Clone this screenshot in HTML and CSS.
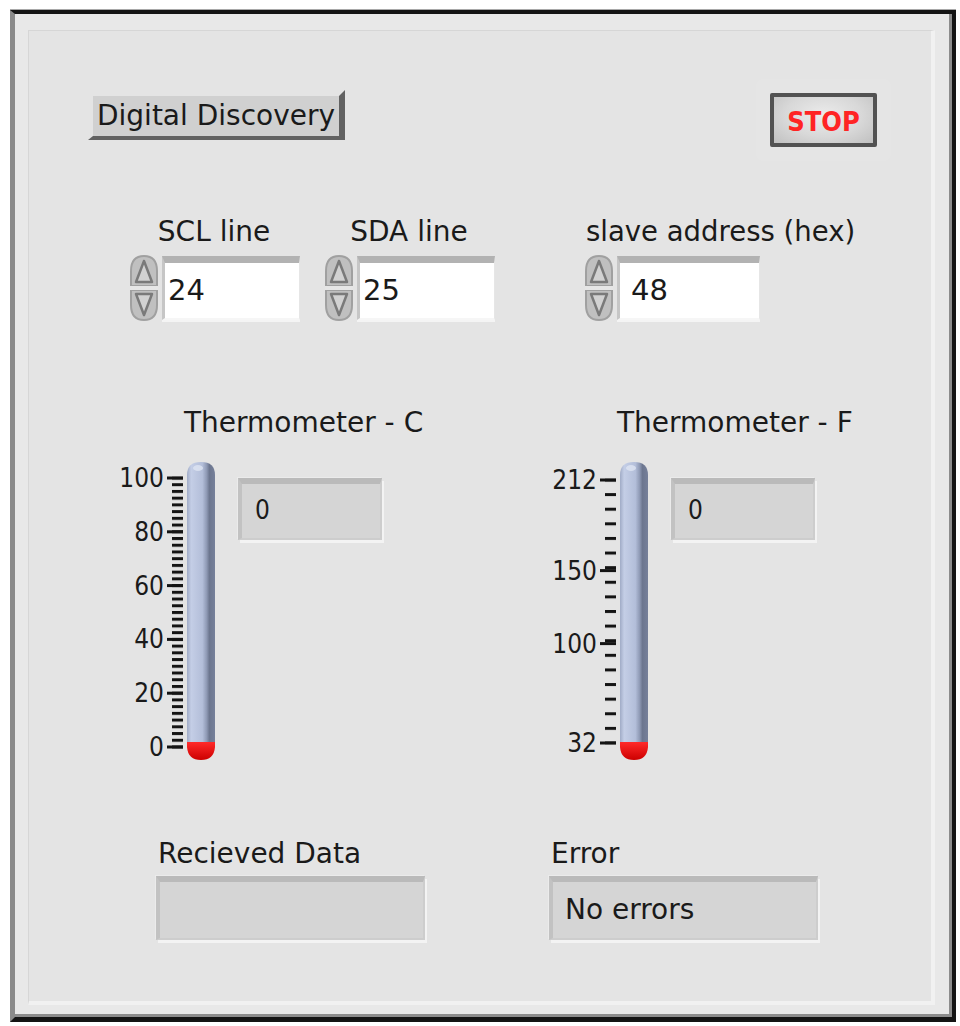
FILE: index.html
```html
<!DOCTYPE html>
<html>
<head>
<meta charset="utf-8">
<title>I2C Thermometer</title>
<link rel="stylesheet" href="styles.css">
</head>
<body>
<div class="window">
  <div class="panel">
    <div class="row-top">
      <div class="btn-dd">Digital Discovery</div>
      <div class="btn-stop">STOP</div>
    </div>

    <div class="row-controls">
      <div class="ctl">
        <div class="lbl">SCL line</div>
        <div class="numctl">
          <svg class="spin" viewBox="0 0 32 70" width="32" height="70">
            <path d="M3,33 L3,18 Q3,3 16,3 Q29,3 29,18 L29,33 Z" fill="#c0c0c0" stroke="#a0a0a0" stroke-width="2"/>
            <path d="M16,8 L8,29 L24,29 Z" fill="#d2d2d2" stroke="#7a7a7a" stroke-width="2.5" stroke-linejoin="round"/>
            <path d="M3,37 L3,52 Q3,67 16,67 Q29,67 29,52 L29,37 Z" fill="#c0c0c0" stroke="#a0a0a0" stroke-width="2"/>
            <path d="M16,62 L8,41 L24,41 Z" fill="#d2d2d2" stroke="#7a7a7a" stroke-width="2.5" stroke-linejoin="round"/>
            <rect x="2" y="33" width="28" height="4" fill="#e6e6e6"/>
          </svg>
          <div class="numbox">24</div>
        </div>
      </div>
      <div class="ctl ctl-sda">
        <div class="lbl">SDA line</div>
        <div class="numctl">
          <svg class="spin" viewBox="0 0 32 70" width="32" height="70">
            <path d="M3,33 L3,18 Q3,3 16,3 Q29,3 29,18 L29,33 Z" fill="#c0c0c0" stroke="#a0a0a0" stroke-width="2"/>
            <path d="M16,8 L8,29 L24,29 Z" fill="#d2d2d2" stroke="#7a7a7a" stroke-width="2.5" stroke-linejoin="round"/>
            <path d="M3,37 L3,52 Q3,67 16,67 Q29,67 29,52 L29,37 Z" fill="#c0c0c0" stroke="#a0a0a0" stroke-width="2"/>
            <path d="M16,62 L8,41 L24,41 Z" fill="#d2d2d2" stroke="#7a7a7a" stroke-width="2.5" stroke-linejoin="round"/>
            <rect x="2" y="33" width="28" height="4" fill="#e6e6e6"/>
          </svg>
          <div class="numbox">25</div>
        </div>
      </div>
      <div class="ctl ctl-slave">
        <div class="lbl">slave address (hex)</div>
        <div class="numctl">
          <svg class="spin" viewBox="0 0 32 70" width="32" height="70">
            <path d="M3,33 L3,18 Q3,3 16,3 Q29,3 29,18 L29,33 Z" fill="#c0c0c0" stroke="#a0a0a0" stroke-width="2"/>
            <path d="M16,8 L8,29 L24,29 Z" fill="#d2d2d2" stroke="#7a7a7a" stroke-width="2.5" stroke-linejoin="round"/>
            <path d="M3,37 L3,52 Q3,67 16,67 Q29,67 29,52 L29,37 Z" fill="#c0c0c0" stroke="#a0a0a0" stroke-width="2"/>
            <path d="M16,62 L8,41 L24,41 Z" fill="#d2d2d2" stroke="#7a7a7a" stroke-width="2.5" stroke-linejoin="round"/>
            <rect x="2" y="33" width="28" height="4" fill="#e6e6e6"/>
          </svg>
          <div class="numbox numbox-wide">48</div>
        </div>
      </div>
    </div>

    <div class="row-thermo">
      <div class="thermo">
        <div class="lbl thermo-lbl">Thermometer - C</div>
        <div class="thermo-body">
          <svg class="scale" viewBox="0 0 110 310" width="110" height="310">
            <defs>
              <linearGradient id="tubeC" x1="0" x2="1" y1="0" y2="0">
                <stop offset="0" stop-color="#a0abc6"/>
                <stop offset="0.15" stop-color="#c4cee6"/>
                <stop offset="0.55" stop-color="#b3bed9"/>
                <stop offset="0.7" stop-color="#8f9ab5"/>
                <stop offset="0.8" stop-color="#6c768f"/>
                <stop offset="1" stop-color="#76809a"/>
              </linearGradient>
              <linearGradient id="bulbC" x1="0" x2="0" y1="0" y2="1">
                <stop offset="0" stop-color="#ff2a2a"/>
                <stop offset="1" stop-color="#cc0000"/>
              </linearGradient>
              <pattern id="ticksC" x="0" y="21.5" width="110" height="6.725" patternUnits="userSpaceOnUse">
                <rect x="62" y="0" width="11" height="3" fill="#141414"/>
              </pattern>
            </defs>
            <rect x="60" y="21.5" width="15" height="273" fill="url(#ticksC)"/>
            <g fill="#141414">
              <rect x="57" y="21.5" width="16" height="3"/>
              <rect x="57" y="75.3" width="16" height="3"/>
              <rect x="57" y="129.1" width="16" height="3"/>
              <rect x="57" y="182.9" width="16" height="3"/>
              <rect x="57" y="236.7" width="16" height="3"/>
              <rect x="57" y="290.5" width="16" height="3"/>
            </g>
            <g class="scale-txt">
              <text x="54" y="23" text-anchor="end" dominant-baseline="central">100</text>
              <text x="54" y="76.8" text-anchor="end" dominant-baseline="central">80</text>
              <text x="54" y="130.6" text-anchor="end" dominant-baseline="central">60</text>
              <text x="54" y="184.4" text-anchor="end" dominant-baseline="central">40</text>
              <text x="54" y="238.2" text-anchor="end" dominant-baseline="central">20</text>
              <text x="54" y="292" text-anchor="end" dominant-baseline="central">0</text>
            </g>
            <path d="M77,292 L77,20 Q77,7 91,7 Q105,7 105,20 L105,292 Z" fill="url(#tubeC)"/>
            <ellipse cx="88" cy="13" rx="5" ry="3" fill="#dfe5f3" opacity="0.8"/>
            <path d="M77,287 L105,287 L105,292 Q104,305 91,305 Q78,305 77,292 Z" fill="url(#bulbC)"/>
          </svg>
          <div class="ind ind-small">0</div>
        </div>
      </div>
      <div class="thermo thermo-f">
        <div class="lbl thermo-lbl">Thermometer - F</div>
        <div class="thermo-body">
          <svg class="scale" viewBox="0 0 110 310" width="110" height="310">
            <defs>
              <linearGradient id="tubeF" x1="0" x2="1" y1="0" y2="0">
                <stop offset="0" stop-color="#a0abc6"/>
                <stop offset="0.15" stop-color="#c4cee6"/>
                <stop offset="0.55" stop-color="#b3bed9"/>
                <stop offset="0.7" stop-color="#8f9ab5"/>
                <stop offset="0.8" stop-color="#6c768f"/>
                <stop offset="1" stop-color="#76809a"/>
              </linearGradient>
              <linearGradient id="bulbF" x1="0" x2="0" y1="0" y2="1">
                <stop offset="0" stop-color="#ff2a2a"/>
                <stop offset="1" stop-color="#cc0000"/>
              </linearGradient>
              <pattern id="ticksF" x="0" y="23.5" width="110" height="14.611" patternUnits="userSpaceOnUse">
                <rect x="62" y="0" width="11" height="3" fill="#141414"/>
              </pattern>
            </defs>
            <rect x="60" y="23.5" width="15" height="266" fill="url(#ticksF)"/>
            <g fill="#141414">
              <rect x="57" y="23.5" width="16" height="3"/>
              <rect x="57" y="114.1" width="16" height="3"/>
              <rect x="57" y="187.1" width="16" height="3"/>
              <rect x="57" y="286.5" width="16" height="3"/>
            </g>
            <g class="scale-txt">
              <text x="54" y="25" text-anchor="end" dominant-baseline="central">212</text>
              <text x="54" y="115.6" text-anchor="end" dominant-baseline="central">150</text>
              <text x="54" y="188.6" text-anchor="end" dominant-baseline="central">100</text>
              <text x="54" y="288" text-anchor="end" dominant-baseline="central">32</text>
            </g>
            <path d="M77,292 L77,20 Q77,7 91,7 Q105,7 105,20 L105,292 Z" fill="url(#tubeF)"/>
            <ellipse cx="88" cy="13" rx="5" ry="3" fill="#dfe5f3" opacity="0.8"/>
            <path d="M77,287 L105,287 L105,292 Q104,305 91,305 Q78,305 77,292 Z" fill="url(#bulbF)"/>
          </svg>
          <div class="ind ind-small">0</div>
        </div>
      </div>
    </div>

    <div class="row-bottom">
      <div class="out">
        <div class="lbl">Recieved Data</div>
        <div class="ind ind-wide"></div>
      </div>
      <div class="out out-err">
        <div class="lbl">Error</div>
        <div class="ind ind-wide">No errors</div>
      </div>
    </div>
  </div>
</div>
</body>
</html>
```

FILE: styles.css
```css
html, body {
  margin: 0;
  padding: 0;
  background: #ffffff;
}

body {
  font-family: "DejaVu Sans", "Liberation Sans", sans-serif;
  font-size: 28px;
  line-height: 33px;
  color: #1a1a1a;
}

.window {
  box-sizing: border-box;
  width: 946px;
  height: 1012px;
  margin: 10px 0 0 10px;
  border-style: solid;
  border-width: 4px 4px 5px 5px;
  border-color: #141414 #141414 #141414 #8a8a8a;
  box-shadow: inset -3px -3px 0 #8c8c8c, 0 -1px 0 #a8a8a8;
  background: #e8e8e8;
  padding: 16px 17px 12px 13px;
}

.panel {
  box-sizing: border-box;
  height: 100%;
  border-style: solid;
  border-width: 1px 4px 4px 1px;
  border-color: #d6d6d6 #f1f1f1 #f1f1f1 #d6d6d6;
  background: #e4e4e4;
}

.lbl {
  white-space: nowrap;
}

/* top row */
.row-top {
  display: flex;
  justify-content: space-between;
  align-items: flex-start;
  margin-top: 59px;
  padding: 0 54px 0 59px;
}

.btn-dd {
  box-sizing: border-box;
  width: 257px;
  height: 50px;
  border-style: solid;
  border-width: 6px 6px 4px 5px;
  border-color: #e4e4e4 #626262 #626262 #e4e4e4;
  background: #d0d0d0;
  padding: 0 4px;
  line-height: 40px;
  white-space: nowrap;
}

.btn-stop {
  box-sizing: border-box;
  width: 107px;
  height: 54px;
  margin-top: 3px;
  border: 4px solid #525252;
  border-radius: 2px;
  background: radial-gradient(ellipse at 50% 40%, #ececec 0%, #d8d8d8 55%, #c0c0c0 100%);
  display: flex;
  align-items: center;
  justify-content: center;
  padding-top: 3px;
  font-family: "DejaVu Sans Condensed", "DejaVu Sans", sans-serif;
  font-weight: bold;
  font-size: 27px;
  color: #ff2424;
  box-shadow: 0 0 0 14px rgba(255, 255, 255, 0.07);
}

/* numeric controls */
.row-controls {
  display: flex;
  align-items: flex-start;
  margin-top: 68px;
  padding-left: 99px;
}

.ctl {
  display: flex;
  flex-direction: column;
  align-items: center;
}

.ctl-sda {
  margin-left: 23px;
}

.ctl-slave {
  margin-left: 88px;
  align-items: flex-start;
}

.ctl-slave .lbl {
  padding-left: 3px;
  font-size: 27.5px;
}

.numctl {
  display: flex;
  align-items: center;
  gap: 2px;
  height: 70px;
  margin-top: 5px;
}

.spin {
  display: block;
  width: 32px;
  height: 70px;
}

.numbox {
  box-sizing: border-box;
  width: 138px;
  height: 64px;
  background: #ffffff;
  border-style: solid;
  border-width: 7px 1px 2px 3px;
  border-color: #b2b2b2 #e6e6e6 #f6f6f6 #c6c6c6;
  box-shadow: 0 2px 0 #f4f4f4;
  padding-left: 3px;
  font-size: 29px;
  line-height: 55px;
}

.numbox-wide {
  width: 143px;
  padding-left: 11px;
}

/* thermometers */
.row-thermo {
  display: flex;
  align-items: flex-start;
  margin-top: 83px;
  padding-left: 81px;
}

.thermo {
  width: 272px;
}

.thermo-f {
  margin-left: 161px;
}

.thermo-lbl {
  padding-left: 74px;
}

.thermo-body {
  display: flex;
  align-items: flex-start;
  margin-top: 16px;
}

.scale {
  display: block;
  flex: none;
  width: 110px;
  height: 310px;
}

.scale-txt {
  font-family: "DejaVu Sans Condensed", "DejaVu Sans", sans-serif;
  font-size: 26px;
  fill: #1a1a1a;
}

.ind {
  box-sizing: border-box;
  background: #d5d5d5;
  border-style: solid;
  border-width: 6px 2px 2px 4px;
  border-color: #bababa #cdcdcd #cdcdcd #c2c2c2;
  box-shadow: 2px 3px 0 #f3f3f3, -1px -1px 0 #ebebeb;
  padding-left: 13px;
  white-space: nowrap;
}

.ind-small {
  flex: none;
  width: 144px;
  height: 62px;
  margin-left: 18px;
  margin-top: 23px;
  font-family: "DejaVu Sans Condensed", "DejaVu Sans", sans-serif;
  font-size: 26px;
  line-height: 52px;
}

/* bottom indicators */
.row-bottom {
  display: flex;
  align-items: flex-start;
  margin-top: 72px;
  padding-left: 127px;
}

.out-err {
  margin-left: 124px;
}

.out .lbl {
  padding-left: 2px;
}

.ind-wide {
  width: 269px;
  height: 64px;
  margin-top: 6px;
  padding-left: 12px;
  line-height: 56px;
}
```
